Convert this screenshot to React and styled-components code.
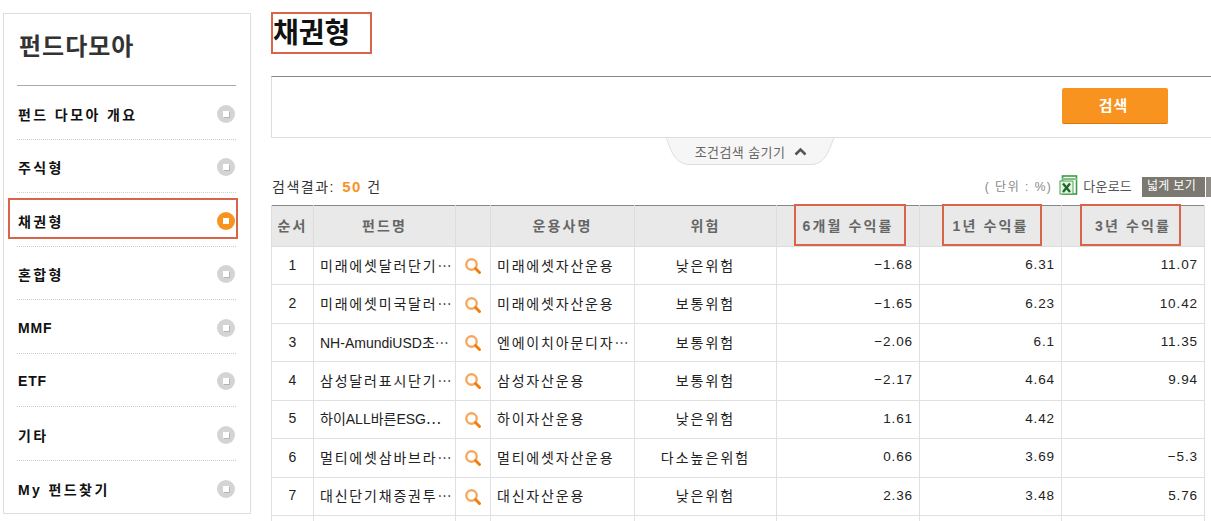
import React from 'react';
import styled, { createGlobalStyle } from 'styled-components';

const FONT = `"Liberation Sans", "Noto Sans CJK KR", sans-serif`;

const Global = createGlobalStyle`
  html, body { margin: 0; padding: 0; background: #fff; height: 521px; overflow: hidden; }
  * { box-sizing: border-box; }
  body { font-family: ${FONT}; color: #222; }
`;

const Page = styled.div`
  display: flex;
  align-items: flex-start;
  gap: 20px;
  width: 1211px;
  height: 521px;
  overflow: hidden;
  padding: 12px 0 0 3px;
`;

const Sidebar = styled.aside`
  flex: none;
  width: 248px;
  height: 501px;
  margin-top: 1px;
  border: 1px solid #ddd;
  padding: 0 14px 0 13px;
`;

const SideTitle = styled.h2`
  margin: 0;
  height: 72px;
  padding: 15px 0 0 2px;
  font-size: 24px;
  line-height: 36px;
  letter-spacing: 1px;
  font-weight: 700;
  color: #333;
  border-bottom: 1px solid #aaa;
`;

const MenuList = styled.ul`
  list-style: none;
  margin: 0;
  padding: 0;
`;

const MenuItem = styled.li`
  position: relative;
  display: flex;
  align-items: center;
  justify-content: space-between;
  height: 53.5px;
  padding: 3px 1px 0 1px;
  font-size: 14px;
  font-weight: 700;
  letter-spacing: ${p => (p.$latin ? '0.8px' : '2.4px')};
  color: #111;
  border-bottom: 1px dotted #ccc;
  &:last-child { border-bottom: none; }
`;

const Dot = styled.span`
  flex: none;
  display: flex;
  align-items: center;
  justify-content: center;
  width: 18px;
  height: 18px;
  border-radius: 50%;
  background: ${p => (p.$on ? '#f7931e' : '#d4d4d4')};
  &::after {
    content: '';
    width: 6px;
    height: 6px;
    background: #fff;
    box-shadow: ${p => (p.$on ? 'none' : '1px 1px 0 #b5b5b5')};
  }
`;

const MenuMark = styled.span`
  position: absolute;
  left: -9px;
  right: -2px;
  top: 5px;
  height: 41px;
  border: 2px solid #d8644a;
  pointer-events: none;
`;

const Main = styled.main`
  flex: none;
  width: 940px;
`;

const Title = styled.h1`
  margin: 0;
  width: 101px;
  height: 42px;
  border: 2px solid #d8644a;
  font-size: 28px;
  line-height: 39px;
  font-weight: 700;
  color: #111;
  white-space: nowrap;
`;

const SearchBox = styled.section`
  margin-top: 22px;
  height: 62px;
  border-top: 1px solid #888;
  border-left: 1px solid #ddd;
  border-bottom: 1px solid #ddd;
  display: flex;
  justify-content: flex-end;
  align-items: flex-start;
  padding: 11px 43px 0 0;
`;

const SearchButton = styled.button`
  width: 106px;
  height: 36px;
  border: none;
  border-bottom: 1px solid #d9770f;
  border-radius: 2px;
  background: #f7931e;
  color: #fff;
  font: 700 15px ${FONT};
  letter-spacing: 1px;
  padding: 0 3px 3px 0;
`;

const TabRow = styled.div`
  display: flex;
  height: 27px;
  padding-left: 394px;
`;

const HideTab = styled.button`
  position: relative;
  isolation: isolate;
  flex: none;
  display: flex;
  align-items: center;
  gap: 9px;
  height: 28px;
  width: 170px;
  justify-content: center;
  border: none;
  background: none;
  padding: 0 0 2px 2px;
  font: 400 13px ${FONT};
  letter-spacing: 0.4px;
  color: #666;
  svg.shape { position: absolute; inset: 0; z-index: -1; }
`;

const Toolbar = styled.div`
  display: flex;
  align-items: center;
  justify-content: space-between;
  height: 40px;
  padding: 1px 0 0 1px;
`;

const ResultCount = styled.div`
  font-size: 14px;
  letter-spacing: 1.5px;
  color: #333;
  b { color: #f7931e; font-weight: 700; font-size: 15px; letter-spacing: 1.4px; margin: 0 0 0 2px; }
`;

const Tools = styled.div`
  display: flex;
  align-items: center;
  font-size: 13px;
  color: #555;
`;

const Unit = styled.span`
  color: #888;
  font-size: 12px;
  letter-spacing: 1.5px;
  margin-right: 7px;
`;

const Download = styled.span`
  margin: 0 10px 0 5px;
  font-size: 13px;
  letter-spacing: 0.2px;
  color: #555;
`;

const WideButton = styled.span`
  flex: none;
  width: 63px;
  height: 20px;
  margin-top: 2px;
  background: #7b7871;
  color: #fff;
  font-size: 12px;
  line-height: 19px;
  padding-left: 5px;
  letter-spacing: 0.3px;
  white-space: nowrap;
  overflow: hidden;
`;

const WideEdge = styled.span`
  flex: none;
  width: 5px;
  height: 20px;
  margin: 2px 0 0 1px;
  background: #8f8d86;
`;

const Table = styled.table`
  width: 933px;
  table-layout: fixed;
  border-collapse: collapse;
  border-top: 1px solid #888;
`;

const Th = styled.th`
  position: relative;
  height: 41px;
  background: #e9e9e9;
  border: 1px solid #ddd;
  border-top: none;
  padding: 0 0 2px;
  color: #666;
  font-weight: 700;
  font-size: 14px;
  letter-spacing: 2.1px;
  white-space: nowrap;
`;

const HeadMark = styled.span`
  position: absolute;
  top: -2px;
  bottom: 0;
  left: ${p => p.$l}px;
  width: ${p => p.$w}px;
  border: 2px solid #d8644a;
  pointer-events: none;
`;

const Tr = styled.tr`
  height: 38.43px;
`;

const Td = styled.td`
  border: 1px solid #e0e0e0;
  padding: 0 0 2px;
  text-align: center;
  color: #222;
  font-size: 14px;
  letter-spacing: 2px;
  white-space: nowrap;
  overflow: hidden;
`;

const NameCell = styled(Td)`
  text-align: left;
  padding-left: 6px;
  letter-spacing: ${p => (p.$compact ? '0' : '1.8px')};
`;

const NumCell = styled(Td)`
  text-align: right;
  padding-right: 6px;
  font-size: 13.5px;
  letter-spacing: 0.9px;
`;

const OrderCell = styled(Td)`
  letter-spacing: 0;
`;

const IconCell = styled(Td)`
  padding: 1px 0 0;
`;

const IconWrap = styled.span`
  display: flex;
  justify-content: center;
  align-items: center;
`;

const Magnifier = () => (
  <svg width="18" height="18" viewBox="0 0 18 18" fill="none">
    <circle cx="7.5" cy="7.5" r="5.2" stroke="#f6a860" strokeWidth="2.4" />
    <path d="M11.5 11.5 L15.5 15.5" stroke="#f07f13" strokeWidth="3" strokeLinecap="round" />
  </svg>
);

const ExcelIcon = () => (
  <svg width="19" height="21" viewBox="0 0 19 21">
    <rect x="3.5" y="1" width="14" height="18" fill="#fff" stroke="#3f9a45" strokeWidth="1.6" />
    <path d="M3 4 H18" stroke="#7cc47f" strokeWidth="2" />
    <rect x="1" y="6" width="13" height="13" fill="#e8f3e4" stroke="#4ea350" />
    <path d="M4 8.5 L11 17 M11 8.5 L4 17" stroke="#1d6b2a" strokeWidth="2.4" />
  </svg>
);

const menus = ['펀드 다모아 개요', '주식형', '채권형', '혼합형', 'MMF', 'ETF', '기타', 'My 펀드찾기'];

const rows = [
  ['1', '미래에셋달러단기⋯', '미래에셋자산운용', '낮은위험', '−1.68', '6.31', '11.07'],
  ['2', '미래에셋미국달러⋯', '미래에셋자산운용', '보통위험', '−1.65', '6.23', '10.42'],
  ['3', 'NH-AmundiUSD초⋯', '엔에이치아문디자⋯', '보통위험', '−2.06', '6.1', '11.35'],
  ['4', '삼성달러표시단기⋯', '삼성자산운용', '보통위험', '−2.17', '4.64', '9.94'],
  ['5', '하이ALL바른ESG⋯', '하이자산운용', '낮은위험', '1.61', '4.42', ''],
  ['6', '멀티에셋삼바브라⋯', '멀티에셋자산운용', '다소높은위험', '0.66', '3.69', '−5.3'],
  ['7', '대신단기채증권투⋯', '대신자산운용', '낮은위험', '2.36', '3.48', '5.76'],
  ['', '', '', '', '', '', ''],
];

const widths = [42, 142, 35, 144, 142, 143, 142, 143];

export default function App() {
  return (
    <>
      <Global />
      <Page>
        <Sidebar>
          <SideTitle>펀드다모아</SideTitle>
          <MenuList>
            {menus.map((m, i) => (
              <MenuItem key={m} $latin={m === 'MMF' || m === 'ETF'}>
                <span>{m}</span>
                <Dot $on={i === 2} />
                {i === 2 && <MenuMark />}
              </MenuItem>
            ))}
          </MenuList>
        </Sidebar>
        <Main>
          <Title>채권형</Title>
          <SearchBox>
            <SearchButton>검색</SearchButton>
          </SearchBox>
          <TabRow>
            <HideTab>
              <svg className="shape" width="170" height="28" viewBox="0 0 170 28" fill="none">
                <path d="M1 0 C5 8 8 26 24 26.5 H146 C162 26 165 8 169 0" fill="#f6f6f6" stroke="#ddd" />
              </svg>
              조건검색 숨기기
              <svg width="13" height="9" viewBox="0 0 13 9" fill="none">
                <path d="M1.5 7.5 L6.5 2.5 L11.5 7.5" stroke="#555" strokeWidth="2.6" />
              </svg>
            </HideTab>
          </TabRow>
          <Toolbar>
            <ResultCount>검색결과: <b>50</b> 건</ResultCount>
            <Tools>
              <Unit>( 단위 : %)</Unit>
              <ExcelIcon />
              <Download>다운로드</Download>
              <WideButton>넓게 보기</WideButton>
              <WideEdge />
            </Tools>
          </Toolbar>
          <Table>
            <colgroup>
              {widths.map((w, i) => <col key={i} style={{ width: w }} />)}
            </colgroup>
            <thead>
              <tr>
                <Th>순서</Th>
                <Th>펀드명</Th>
                <Th />
                <Th>운용사명</Th>
                <Th>위험</Th>
                <Th>6개월 수익률<HeadMark $l={17} $w={112} /></Th>
                <Th>1년 수익률<HeadMark $l={22} $w={100} /></Th>
                <Th>3년 수익률<HeadMark $l={18} $w={101} /></Th>
              </tr>
            </thead>
            <tbody>
              {rows.map((r, i) => (
                <Tr key={i}>
                  <OrderCell>{r[0]}</OrderCell>
                  <NameCell $compact={/[A-Z]/.test(r[1])}>{r[1]}</NameCell>
                  <IconCell>{r[0] && <IconWrap><Magnifier /></IconWrap>}</IconCell>
                  <NameCell>{r[2]}</NameCell>
                  <Td>{r[3]}</Td>
                  <NumCell>{r[4]}</NumCell>
                  <NumCell>{r[5]}</NumCell>
                  <NumCell>{r[6]}</NumCell>
                </Tr>
              ))}
            </tbody>
          </Table>
        </Main>
      </Page>
    </>
  );
}
